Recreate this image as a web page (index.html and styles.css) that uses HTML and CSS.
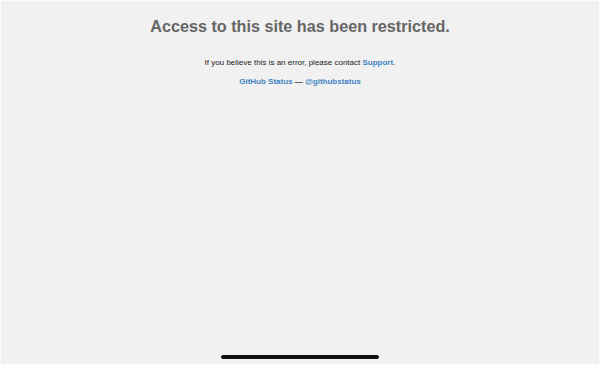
FILE: index.html
```html
<!DOCTYPE html>
<html>
<head>
<meta charset="utf-8">
<link rel="stylesheet" href="styles.css">
</head>
<body>
<div class="page">
  <main class="content">
    <h1 class="title">Access to this site has been restricted.</h1>
    <p class="msg">If you believe this is an error, please contact <a class="link" href="#">Support</a>.</p>
    <p class="status"><a class="link" href="#">GitHub Status</a> — <a class="link" href="#">@githubstatus</a></p>
  </main>
  <div class="home-bar"></div>
</div>
</body>
</html>
```
FILE: styles.css
```css
html, body {
  margin: 0;
  padding: 0;
  width: 600px;
  height: 365px;
  overflow: hidden;
}
body {
  background: #f1f1f1;
  font-family: "Liberation Sans", Arial, sans-serif;
}
.page {
  box-sizing: border-box;
  width: 600px;
  height: 365px;
  border: 1px solid #fbfbfb;
  display: flex;
  flex-direction: column;
  align-items: center;
}
.content {
  flex: 1;
  text-align: center;
  padding-top: 15px;
}
.title {
  margin: 0;
  font-size: 16.2px;
  font-weight: bold;
  color: #666;
  line-height: 20px;
}
.msg {
  margin: 21px 0 0;
  font-size: 8px;
  color: #222;
  line-height: 11px;
}
.status {
  margin: 8px 0 0;
  font-size: 8px;
  font-weight: bold;
  color: #444;
  line-height: 11px;
}
.link {
  color: #4183c4;
  text-decoration: none;
  font-weight: bold;
}
.home-bar {
  width: 158px;
  height: 4px;
  border-radius: 2px;
  background: #111;
  margin-bottom: 5px;
}
```
